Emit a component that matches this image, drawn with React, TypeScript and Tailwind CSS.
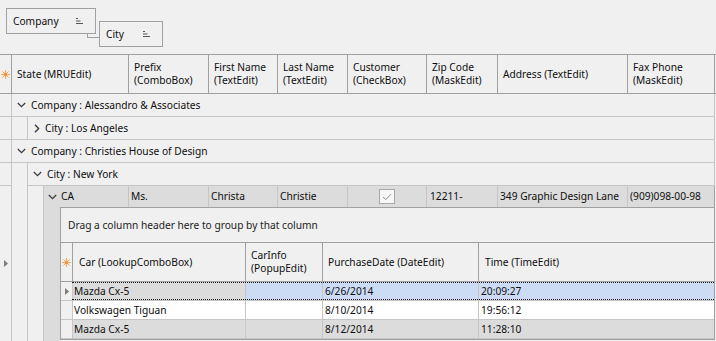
import React from "react";

const Star = () => (
  <svg width="9" height="9" viewBox="0 0 9 9">
    <g stroke="#f6a04d" strokeWidth="1" strokeLinecap="round">
      <line x1="4.5" y1="0.5" x2="4.5" y2="2" />
      <line x1="4.5" y1="7" x2="4.5" y2="8.5" />
      <line x1="0.5" y1="4.5" x2="2" y2="4.5" />
      <line x1="7" y1="4.5" x2="8.5" y2="4.5" />
      <line x1="1.7" y1="1.7" x2="2.6" y2="2.6" />
      <line x1="6.4" y1="6.4" x2="7.3" y2="7.3" />
      <line x1="1.7" y1="7.3" x2="2.6" y2="6.4" />
      <line x1="6.4" y1="2.6" x2="7.3" y2="1.7" />
    </g>
    <circle cx="4.5" cy="4.5" r="2" fill="#f5963a" />
  </svg>
);

const SortIcon = () => (
  <svg width="7" height="6" viewBox="0 0 7 6">
    <rect x="0" y="0" width="2" height="1" fill="#555" />
    <rect x="0" y="2.5" width="4.5" height="1" fill="#555" />
    <rect x="0" y="5" width="7" height="1" fill="#555" />
  </svg>
);

const ChevDown = () => (
  <svg width="9" height="6" viewBox="0 0 9 6">
    <path d="M0.8 1 L4.5 4.6 L8.2 1" fill="none" stroke="#3c3c3c" strokeWidth="1.3" />
  </svg>
);

const ChevRight = () => (
  <svg width="6" height="9" viewBox="0 0 6 9">
    <path d="M1 0.8 L4.6 4.5 L1 8.2" fill="none" stroke="#3c3c3c" strokeWidth="1.4" />
  </svg>
);

const Arrow = () => (
  <svg width="4" height="7" viewBox="0 0 4 7">
    <polygon points="0,0 4,3.5 0,7" fill="#7d7d7d" />
  </svg>
);

const Check = () => (
  <div className="w-[16px] h-[15px] border border-[#a8a8a8] bg-[#f7f7f7] flex items-center justify-center">
    <svg width="10" height="8" viewBox="0 0 10 8">
      <path d="M1 4 L3.8 6.6 L9 1.2" fill="none" stroke="#8c8c8c" strokeWidth="1" />
    </svg>
  </div>
);

export default function App() {
  return (
    <div className="w-[716px] h-[341px] bg-[#f0f0f0] overflow-hidden font-['Noto_Sans',sans-serif] text-[10.2px] text-[#0e0e0e] leading-[13px]">
      {/* group panel */}
      <div className="relative h-[54px] flex items-start pl-[6px] pt-[8px]">
        <div className="w-[90px] h-[26px] border border-[#a0a0a0] flex items-center justify-between pl-[6px] pr-[12px]">
          <span>Company</span>
          <SortIcon />
        </div>
        <div className="w-[64px] h-[26px] mt-[13px] ml-[3px] border border-[#a0a0a0] flex items-center justify-between pl-[6px] pr-[12px]">
          <span>City</span>
          <SortIcon />
        </div>
        <div className="absolute left-[87px] top-[34px] w-[12px] h-[4px] border-l border-b border-[#a0a0a0]" />
      </div>

      {/* header */}
      <div className="flex h-[40px] border-y border-[#a0a0a0]">
        <div className="w-[12px] border-r border-[#a0a0a0] flex items-center justify-center">
          <Star />
        </div>
        <div className="w-[117px] border-r border-[#a0a0a0] flex items-center pl-[5px]">State (MRUEdit)</div>
        <div className="w-[80px] border-r border-[#a0a0a0] flex items-center pl-[5px]">Prefix<br />(ComboBox)</div>
        <div className="w-[69px] border-r border-[#a0a0a0] flex items-center pl-[5px]">First Name<br />(TextEdit)</div>
        <div className="w-[70px] border-r border-[#a0a0a0] flex items-center pl-[5px]">Last Name<br />(TextEdit)</div>
        <div className="w-[79px] border-r border-[#a0a0a0] flex items-center pl-[5px]">Customer<br />(CheckBox)</div>
        <div className="w-[71px] border-r border-[#a0a0a0] flex items-center pl-[5px]">Zip Code<br />(MaskEdit)</div>
        <div className="w-[130px] border-r border-[#a0a0a0] flex items-center pl-[5px]">Address (TextEdit)</div>
        <div className="w-[87px] border-r border-[#a0a0a0] flex items-center pl-[5px]">Fax Phone<br />(MaskEdit)</div>
      </div>

      {/* Company: Alessandro */}
      <div className="flex h-[23px]">
        <div className="w-[12px] border-r border-b border-[#c6c6c6]" />
        <div className="w-[703px] border-b border-r border-[#c6c6c6] flex items-center pl-[5px]">
          <ChevDown />
          <span className="ml-[5px]">Company : Alessandro &amp; Associates</span>
        </div>
      </div>
      {/* City: LA */}
      <div className="flex h-[23px]">
        <div className="w-[12px] border-r border-b border-[#c6c6c6]" />
        <div className="w-[15px] border-b border-[#c6c6c6]" />
        <div className="w-[688px] border-l border-b border-r border-[#c6c6c6] flex items-center pl-[6px]">
          <ChevRight />
          <span className="ml-[5px]">City : Los Angeles</span>
        </div>
      </div>
      {/* Company: Christies */}
      <div className="flex h-[23px]">
        <div className="w-[12px] border-r border-b border-[#c6c6c6]" />
        <div className="w-[703px] border-b border-r border-[#c6c6c6] flex items-center pl-[5px]">
          <ChevDown />
          <span className="ml-[5px]">Company : Christies House of Design</span>
        </div>
      </div>
      {/* City: NY */}
      <div className="flex h-[23px]">
        <div className="w-[12px] border-r border-b border-[#c6c6c6]" />
        <div className="w-[15px]" />
        <div className="w-[688px] border-l border-b border-r border-[#c6c6c6] flex items-center pl-[5px]">
          <ChevDown />
          <span className="ml-[5px]">City : New York</span>
        </div>
      </div>

      {/* data row + detail */}
      <div className="flex h-[155px]">
        <div className="w-[12px] border-r border-[#c6c6c6] flex items-center justify-center pl-[1px]">
          <Arrow />
        </div>
        <div className="w-[15px]" />
        <div className="w-[16px] border-l border-[#c6c6c6]" />
        <div className="w-[672px] border-l border-[#c6c6c6] flex flex-col">
          {/* data row */}
          <div className="flex h-[21px] bg-[#dcdcdc]">
            <div className="w-[85px] border-r border-[#c6c6c6] flex items-center pl-[4px]">
              <ChevDown />
              <span className="ml-[4px]">CA</span>
            </div>
            <div className="w-[80px] border-r border-[#c6c6c6] flex items-center pl-[2px]">Ms.</div>
            <div className="w-[69px] border-r border-[#c6c6c6] flex items-center pl-[2px]">Christa</div>
            <div className="w-[70px] border-r border-[#c6c6c6] flex items-center pl-[2px]">Christie</div>
            <div className="w-[79px] border-r border-[#c6c6c6] flex items-center justify-center">
              <Check />
            </div>
            <div className="w-[71px] border-r border-[#c6c6c6] flex items-center pl-[3px]">12211-</div>
            <div className="w-[130px] border-r border-[#c6c6c6] flex items-center pl-[2px]">349 Graphic Design Lane</div>
            <div className="w-[87px] border-r border-[#a0a0a0] flex items-center pl-[2px]">(909)098-00-98</div>
          </div>
          {/* detail */}
          <div className="flex h-[134px]">
            <div className="w-[16px] bg-[#dcdcdc]" />
            <div className="w-[655px] h-[133px] border border-[#a0a0a0] flex flex-col">
              <div className="h-[35px] border-b border-[#a0a0a0] flex items-center pl-[7px] text-[#222]">
                Drag a column header here to group by that column
              </div>
              <div className="flex h-[39px] border-b border-[#a0a0a0]">
                <div className="w-[12px] border-r border-[#a0a0a0] flex items-center justify-center">
                  <Star />
                </div>
                <div className="w-[173px] border-r border-[#a0a0a0] flex items-center pl-[6px]">Car (LookupComboBox)</div>
                <div className="w-[77px] border-r border-[#a0a0a0] flex items-center pl-[5px]">CarInfo<br />(PopupEdit)</div>
                <div className="w-[156px] border-r border-[#a0a0a0] flex items-center pl-[5px]">PurchaseDate (DateEdit)</div>
                <div className="w-[235px] flex items-center pl-[6px]">Time (TimeEdit)</div>
              </div>
              {/* row 1 */}
              <div className="relative flex h-[19px] border-b border-[#c6c6c6]">
                <div className="w-[12px] border-r border-[#c6c6c6] flex items-center justify-center pl-[1px]">
                  <Arrow />
                </div>
                <div className="w-[173px] border-r border-[#c6c6c6] bg-[#dcdcdc] flex items-center pl-[1px]">Mazda Cx-5</div>
                <div className="w-[77px] border-r border-[#c6c6c6] bg-[#cddcf5]" />
                <div className="w-[156px] border-r border-[#c6c6c6] bg-[#cddcf5] flex items-center pl-[2px]">6/26/2014</div>
                <div className="w-[235px] bg-[#cddcf5] flex items-center pl-[2px]">20:09:27</div>
                <div className="absolute left-[11px] right-0 top-0 h-[18px] border-y border-dotted border-[#1a1a1a] pointer-events-none" />
              </div>
              {/* row 2 */}
              <div className="flex h-[19px] border-b border-[#c6c6c6]">
                <div className="w-[12px] border-r border-[#c6c6c6]" />
                <div className="w-[173px] border-r border-[#c6c6c6] bg-white flex items-center pl-[1px]">Volkswagen Tiguan</div>
                <div className="w-[77px] border-r border-[#c6c6c6] bg-white" />
                <div className="w-[156px] border-r border-[#c6c6c6] bg-white flex items-center pl-[2px]">8/10/2014</div>
                <div className="w-[235px] bg-white flex items-center pl-[2px]">19:56:12</div>
              </div>
              {/* row 3 */}
              <div className="flex h-[19px] border-b border-[#c6c6c6]">
                <div className="w-[12px] border-r border-[#c6c6c6]" />
                <div className="w-[173px] border-r border-[#c6c6c6] bg-[#dcdcdc] flex items-center pl-[1px]">Mazda Cx-5</div>
                <div className="w-[77px] border-r border-[#c6c6c6] bg-[#dcdcdc]" />
                <div className="w-[156px] border-r border-[#c6c6c6] bg-[#dcdcdc] flex items-center pl-[2px]">8/12/2014</div>
                <div className="w-[235px] bg-[#dcdcdc] flex items-center pl-[2px]">11:28:10</div>
              </div>
            </div>
          </div>
        </div>
      </div>
    </div>
  );
}
